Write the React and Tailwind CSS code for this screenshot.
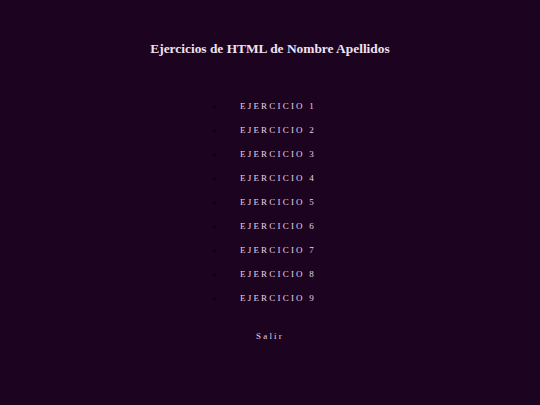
import React from 'react';

const items = [1, 2, 3, 4, 5, 6, 7, 8, 9];

export default function App() {
  return (
    <div className="min-h-screen w-full bg-[#1c0421] text-[#e8d4ea] flex flex-col items-center" style={{ fontFamily: '"Liberation Serif", serif' }}>
      <h1 className="mt-[40px] text-[13.4px] font-bold leading-[18px] text-[#eee2ef]">Ejercicios de HTML de Nombre Apellidos</h1>
      <ul className="mt-[41px] mr-[11px] flex flex-col gap-[10px]">
        {items.map((n) => (
          <li key={n} className="flex items-center h-[14px]">
            <span className="w-[3px] h-[3px] rounded-full bg-[#0a0010] mr-[24px]"></span>
            <a href="#" className="text-[9px] tracking-[2.2px] leading-[14px] text-[#e8d4ea]">EJERCICIO {n}</a>
          </li>
        ))}
      </ul>
      <a href="#" className="mt-[24px] text-[9px] tracking-[2.2px] leading-[14px] text-[#e8d4ea]">Salir</a>
    </div>
  );
}
